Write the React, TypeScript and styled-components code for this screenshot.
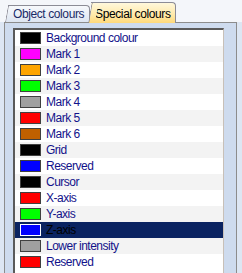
import React from "react";
import styled, { createGlobalStyle } from "styled-components";

const GlobalStyle = createGlobalStyle`
  html, body {
    margin: 0;
    padding: 0;
    background: #dde6f3;
  }
  body {
    font-family: "Liberation Sans", Arial, sans-serif;
  }
`

interface ColourItem {
  name: string
  colour: string
}

const items: ColourItem[] = [
  { name: "Background colour", colour: "#000000" },
  { name: "Mark 1", colour: "#ff00ff" },
  { name: "Mark 2", colour: "#ffa500" },
  { name: "Mark 3", colour: "#00ff00" },
  { name: "Mark 4", colour: "#a0a0a0" },
  { name: "Mark 5", colour: "#ff0000" },
  { name: "Mark 6", colour: "#c06000" },
  { name: "Grid", colour: "#000000" },
  { name: "Reserved", colour: "#0000ff" },
  { name: "Cursor", colour: "#000000" },
  { name: "X-axis", colour: "#ff0000" },
  { name: "Y-axis", colour: "#00ff00" },
  { name: "Z-axis", colour: "#0000ff" },
  { name: "Lower intensity", colour: "#a0a0a0" },
  { name: "Reserved", colour: "#ff0000" },
]

const SELECTED = 12

export default function App() {
  return (
    <>
      <GlobalStyle />
      <Window>
        <TabRow>
          <Tab>Object colours</Tab>
          <Tab $active>Special colours</Tab>
        </TabRow>
        <Panel>
          <ListBox>
            {items.map((item, i) => (
              <Row key={i} $odd={i % 2 === 1} $selected={i === SELECTED}>
                <Swatch $colour={item.colour} $selected={i === SELECTED} />
                <Label>{item.name}</Label>
              </Row>
            ))}
          </ListBox>
        </Panel>
      </Window>
    </>
  )
}

const Window = styled.div`
  width: 242px;
  height: 273px;
  overflow: hidden;
  background: #dde6f3;
`

const TabRow = styled.div`
  display: flex;
  align-items: flex-end;
  height: 22px;
  padding-left: 8px;
  background: #f4f6fa;
`

const Tab = styled.div<{ $active?: boolean }>`
  position: relative;
  box-sizing: border-box;
  height: ${(p) => (p.$active ? "21px" : "17px")};
  margin-bottom: ${(p) => (p.$active ? "-1px" : "0")};
  padding: ${(p) => (p.$active ? "4px 4px 0 4px" : "1px 5px 0 5px")};
  margin-left: ${(p) => (p.$active ? "1px" : "0")};
  border: 1px solid #8c8c96;
  border-left: none;
  border-bottom: none;
  border-top-right-radius: 4px;
  background: ${(p) =>
    p.$active
      ? "linear-gradient(#fff8dc, #ffe9a8 60%, #ffd97a)"
      : "linear-gradient(#f7f9fc, #dde5f1)"};
  color: ${(p) => (p.$active ? "#000000" : "#1a2a66")};
  font-size: 12px;
  letter-spacing: -0.4px;
  line-height: 14px;
  white-space: nowrap;
  z-index: ${(p) => (p.$active ? 2 : 1)};

  &::before {
    content: "";
    position: absolute;
    left: -3px;
    top: -1px;
    bottom: 0;
    width: 6px;
    border-left: 1px solid #8c8c96;
    border-top: 1px solid #8c8c96;
    border-top-left-radius: 2px;
    background: inherit;
    transform: skewX(-10deg);
    transform-origin: bottom left;
  }
`

const Panel = styled.div`
  box-sizing: border-box;
  width: 233px;
  height: 260px;
  margin-left: 4px;
  padding: 5px 12px 0 8px;
  border: 1px solid #8c8c8c;
  border-bottom: none;
  background: #cedbee;
  position: relative;
  z-index: 1;
`

const ListBox = styled.div`
  box-sizing: border-box;
  width: 211px;
  height: 260px;
  border-top: 2px solid #5a5a5a;
  border-left: 2px solid #5a5a5a;
  border-right: 1px solid #c8c0b8;
  background: #ffffff;
`

const Row = styled.div<{ $odd: boolean; $selected: boolean }>`
  display: flex;
  align-items: center;
  height: 16px;
  padding-left: 5px;
  background: ${(p) => (p.$selected ? "#0a2361" : p.$odd ? "#f3f3f3" : "#ffffff")};
  color: ${(p) => (p.$selected ? "#000000" : "#12128a")};
`

const Swatch = styled.div<{ $colour: string; $selected: boolean }>`
  box-sizing: border-box;
  width: 21px;
  height: 12px;
  margin-right: 5px;
  border: 1px solid ${(p) => (p.$selected ? "#ffffff" : "#404040")};
  background: ${(p) => p.$colour};
`

const Label = styled.span`
  font-size: 12px;
  letter-spacing: -0.5px;
  line-height: 16px;
  white-space: nowrap;
`
